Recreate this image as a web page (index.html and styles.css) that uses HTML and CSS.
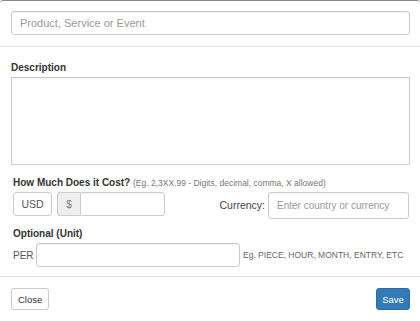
FILE: index.html
```html
<!DOCTYPE html>
<html lang="en">
<head>
    <meta charset="UTF-8">
    <meta name="viewport" content="width=device-width, initial-scale=1.0">
    <title>Add Item</title>
    <link rel="stylesheet" href="styles.css">
</head>
<body>
    <div class="modal-content">
        <div class="modal-header">
            <input type="text" class="form-control" placeholder="Product, Service or Event">
        </div>

        <div class="modal-body">
            <label class="field-label">Description</label>
            <textarea class="form-control description"></textarea>

            <div class="cost">
                <label class="field-label">How Much Does it Cost? <span class="hint">(Eg. 2,3XX.99 - Digits, decimal, comma, X allowed)</span></label>
                <div class="cost-row">
                    <button class="btn-currency">USD</button>
                    <div class="input-group">
                        <span class="addon">$</span>
                        <input type="text" class="form-control price">
                    </div>
                    <label class="currency-label">Currency:</label>
                    <input type="text" class="form-control currency" placeholder="Enter country or currency">
                </div>
            </div>

            <div class="unit">
                <label class="field-label">Optional (Unit)</label>
                <div class="unit-row">
                    <span class="per">PER</span>
                    <input type="text" class="form-control unit-input">
                    <span class="unit-hint">Eg. PIECE, HOUR, MONTH, ENTRY, ETC</span>
                </div>
            </div>
        </div>

        <div class="modal-footer">
            <button class="btn">Close</button>
            <button class="btn btn-primary">Save</button>
        </div>
    </div>
</body>
</html>
```

FILE: styles.css
```css
/* Global Styles */
body {
    margin: 0;
    padding: 0;
    font-family: "Liberation Sans", Arial, sans-serif;
    font-size: 11px;
    color: #333;
    background-color: #fff;
}

.modal-content {
    width: 420px;
    height: 321px;
    box-sizing: border-box;
    border-top: 1px solid #8a8a8a;
    border-radius: 3px 3px 0 0;
    background-color: #fff;
    overflow: hidden;
}

.form-control {
    box-sizing: border-box;
    border: 1px solid #ccc;
    border-radius: 3px;
    font-family: inherit;
    font-size: 11px;
    color: #555;
    background-color: #fff;
    padding: 0 8px;
    box-shadow: inset 0 1px 1px rgba(0, 0, 0, 0.05);
}

.form-control::placeholder {
    color: #999;
}

/* Header */
.modal-header {
    padding: 10px 10px 11px 11px;
    border-bottom: 1px solid #e5e5e5;
}

.modal-header .form-control {
    width: 399px;
    height: 24px;
    display: block;
    font-size: 11px;
}

/* Body */
.modal-body {
    padding: 15px 10px 0 11px;
}

.field-label {
    display: block;
    font-weight: bold;
    font-size: 10px;
    margin-bottom: 4px;
}

.description {
    display: block;
    width: 399px;
    height: 88px;
    resize: none;
    border-radius: 0;
}

.cost {
    padding: 12px 0 0 2px;
}

.hint {
    font-weight: normal;
    font-size: 8.5px;
    color: #777;
}

.cost-row {
    display: flex;
    align-items: flex-start;
}

.btn-currency {
    width: 39px;
    height: 24px;
    border: 1px solid #ccc;
    border-radius: 3px;
    background-color: #fff;
    color: #555;
    font-family: inherit;
    font-size: 10.5px;
    padding: 0;
}

.input-group {
    display: flex;
    margin-left: 5px;
}

.addon {
    width: 23px;
    height: 24px;
    box-sizing: border-box;
    border: 1px solid #ccc;
    border-right: none;
    border-radius: 3px 0 0 3px;
    background-color: #eee;
    color: #777;
    display: flex;
    align-items: center;
    justify-content: center;
    font-size: 10px;
}

.price {
    width: 85px;
    height: 24px;
    border-radius: 0 3px 3px 0;
}

.currency-label {
    margin-left: auto;
    margin-right: 3px;
    line-height: 27px;
    font-size: 10.5px;
    color: #444;
}

.currency {
    width: 141px;
    height: 27px;
    padding: 0 8px;
    font-size: 10px;
    margin-right: 1px;
}

.unit {
    padding: 9px 0 0 2px;
}

.unit-row {
    display: flex;
    align-items: center;
}

.per {
    font-size: 10px;
    color: #555;
    width: 23px;
}

.unit-input {
    width: 204px;
    height: 24px;
}

.unit-hint {
    margin-left: 3px;
    font-size: 8.5px;
    color: #666;
}

/* Footer */
.modal-footer {
    margin-top: 9px;
    padding: 11px 10px 0 11px;
    border-top: 1px solid #e5e5e5;
    display: flex;
    justify-content: space-between;
}

.btn {
    height: 22px;
    padding: 0 6px;
    border: 1px solid #ccc;
    border-radius: 3px;
    background-color: #fff;
    color: #333;
    font-family: inherit;
    font-size: 9.5px;
}

.btn-primary {
    background-color: #337ab7;
    border-color: #2e6da4;
    color: #fff;
    width: 34px;
    padding: 0;
}
```
